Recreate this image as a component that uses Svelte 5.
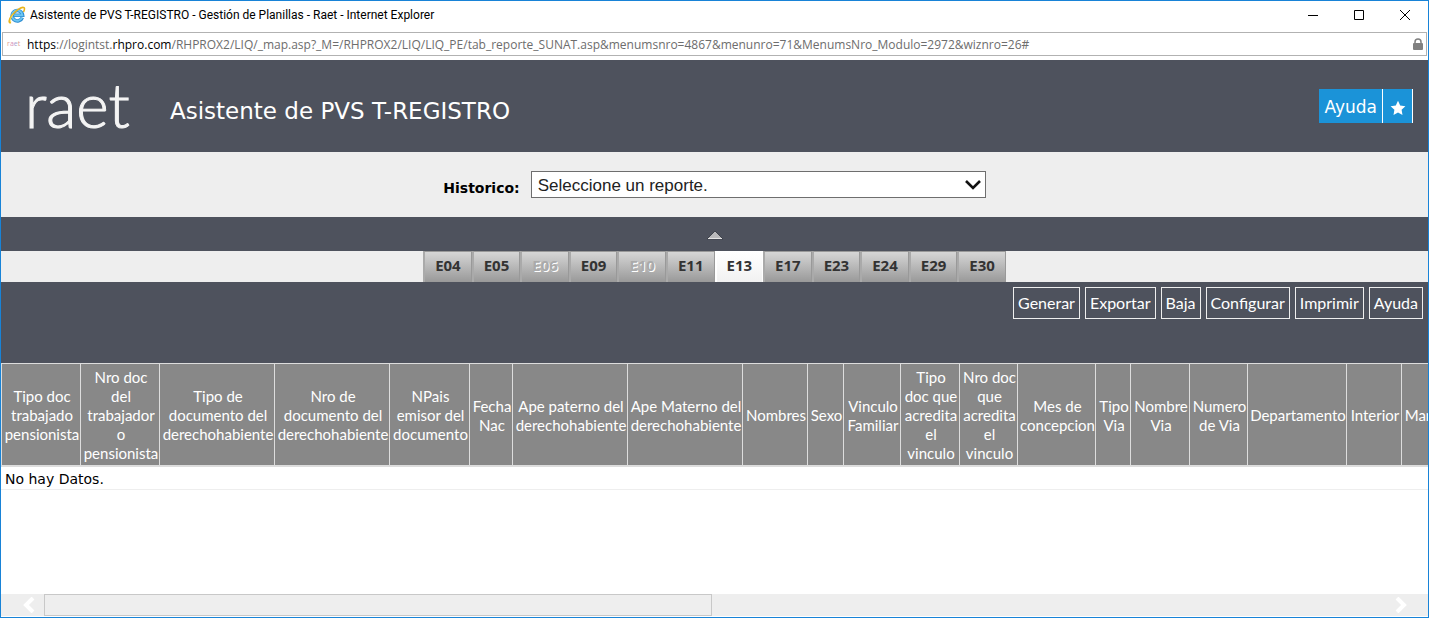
<script>
  const tabs = ['E04', 'E05', 'E06', 'E09', 'E10', 'E11', 'E13', 'E17', 'E23', 'E24', 'E29', 'E30'];
  const disabled = ['E06', 'E10'];
  let active = $state('E13');

  const actions = ['Generar', 'Exportar', 'Baja', 'Configurar', 'Imprimir', 'Ayuda'];

  const columns = [
    { width: 79, lines: ['Tipo doc', 'trabajado', 'pensionista'] },
    { width: 79, lines: ['Nro doc', 'del', 'trabajador', 'o', 'pensionista'] },
    { width: 115, lines: ['Tipo de', 'documento del', 'derechohabiente'] },
    { width: 115, lines: ['Nro de', 'documento del', 'derechohabiente'] },
    { width: 80, lines: ['NPais', 'emisor del', 'documento'] },
    { width: 43, lines: ['Fecha', 'Nac'] },
    { width: 115, lines: ['Ape paterno del', 'derechohabiente'] },
    { width: 115, lines: ['Ape Materno del', 'derechohabiente'] },
    { width: 65, lines: ['Nombres'] },
    { width: 36, lines: ['Sexo'] },
    { width: 57, lines: ['Vinculo', 'Familiar'] },
    { width: 59, lines: ['Tipo', 'doc que', 'acredita', 'el', 'vinculo'] },
    { width: 58, lines: ['Nro doc', 'que', 'acredita', 'el', 'vinculo'] },
    { width: 78, lines: ['Mes de', 'concepcion'] },
    { width: 35, lines: ['Tipo', 'Via'] },
    { width: 59, lines: ['Nombre', 'Via'] },
    { width: 58, lines: ['Numero', 'de Via'] },
    { width: 99, lines: ['Departamento'] },
    { width: 55, lines: ['Interior'] },
    { width: 64, lines: ['Manzana'] }
  ];
</script>

<div class="window">
  <div class="titlebar">
    <svg class="ie" viewBox="0 0 18 18" aria-hidden="true">
      <path d="M14.300 11.600A5.200 5.200 0 1 1 14.600 9.300H6.200" fill="none" stroke="#2a8bd0" stroke-width="3.6" />
      <path d="M14 11.600A5.200 5.200 0 1 1 14.400 9.200H6.200" fill="none" stroke="#6cc5f2" stroke-width="2" />
      <path d="M3 16.600C.3 17.300.6 13.600 4 9.200 7.700 4.400 14 .2 16 1.700c1 .8.4 2.500-.5 4.300" fill="none" stroke="#e8b41c" stroke-width="1.600" />
      <path d="M2.800 16.200C1.700 14.500 3 11 5.200 8.300" fill="none" stroke="#f8d858" stroke-width="1" />
    </svg>
    <span class="title">Asistente de PVS T-REGISTRO - Gestión de Planillas - Raet - Internet Explorer</span>
    <div class="controls">
      <button aria-label="Minimizar"><svg viewBox="0 0 12 12"><path d="M1 6.500h10" /></svg></button>
      <button aria-label="Maximizar"><svg viewBox="0 0 12 12"><path d="M1.500 1.500h9v9h-9z" /></svg></button>
      <button aria-label="Cerrar"><svg viewBox="0 0 12 12"><path d="M1 1l10 10M11 1L1 11" /></svg></button>
    </div>
  </div>

  <div class="address">
    <span class="favicon" aria-hidden="true"><i>r</i><i>a</i><i>e</i><i>t</i></span>
    <span class="url"><b>https</b>://logintst.<b>rhpro.com</b>/RHPROX2/LIQ/_map.asp?_M=/RHPROX2/LIQ/LIQ_PE/tab_reporte_SUNAT.asp&amp;menumsnro=4867&amp;menunro=71&amp;MenumsNro_Modulo=2972&amp;wiznro=26#</span>
    <svg class="lock" viewBox="0 0 10 13" aria-hidden="true">
      <path d="M2 6V4a3 3 0 0 1 6 0v2" fill="none" stroke="#808080" stroke-width="1.500" />
      <rect x="0" y="5" width="10" height="7" rx="1" fill="#808080" />
    </svg>
  </div>

  <header>
    <span class="logo">raet</span>
    <h1>Asistente de PVS T-REGISTRO</h1>
    <div class="help">
      <button>Ayuda</button>
      <button class="star" aria-label="Favorito">
        <svg viewBox="0 0 16 16"><path d="M8 .8l2.200 4.700 5.200.7-3.800 3.600.9 5.200L8 12.500 3.500 15l.9-5.200L.6 6.200l5.200-.7z" fill="#fff" /></svg>
      </button>
    </div>
  </header>

  <div class="filter">
    <label for="historico">Historico:</label>
    <div class="picker">
      <select id="historico">
        <option>Seleccione un reporte.</option>
      </select>
      <svg viewBox="0 0 16 10" aria-hidden="true"><path d="M1 1l7 7 7-7" fill="none" stroke="#111" stroke-width="2.600" /></svg>
    </div>
  </div>

  <div class="collapse">
    <button aria-label="Contraer">
      <svg viewBox="0 0 18 10"><path d="M9 1l8 8H1z" fill="#b9b9bb" stroke="#3f434c" stroke-width="1" /><path d="M2 8.500h14" stroke="#e4e4e4" /></svg>
    </button>
  </div>

  <nav>
    {#each tabs as tab}
      <button class="tab" class:active={tab === active} disabled={disabled.includes(tab)} onclick={() => (active = tab)}>{tab}</button>
    {/each}
  </nav>

  <div class="toolbar">
    {#each actions as action}
      <button>{action}</button>
    {/each}
  </div>

  <main>
    <table>
      <colgroup>
        {#each columns as column}
          <col style="width: {column.width}px" />
        {/each}
      </colgroup>
      <thead>
        <tr>
          {#each columns as column}
            <th scope="col">
              {#each column.lines as line, i}{#if i > 0}<br />{/if}{line}{/each}
            </th>
          {/each}
        </tr>
      </thead>
      <tbody>
        <tr><td colspan={columns.length}>No hay Datos.</td></tr>
      </tbody>
    </table>
  </main>

  <div class="scrollbar">
    <button aria-label="Desplazar a la izquierda"><svg viewBox="0 0 12 16"><path d="M10 1L3 8l7 7" /></svg></button>
    <div class="track"><div class="thumb"></div></div>
    <button aria-label="Desplazar a la derecha"><svg viewBox="0 0 12 16"><path d="M2 1l7 7-7 7" /></svg></button>
  </div>
</div>

<style>
  .window {
    box-sizing: border-box;
    min-height: 100vh;
    display: flex;
    flex-direction: column;
    overflow: hidden;
    border: 1px solid #1883d7;
    background: #fff;
    font-family: 'DejaVu Sans', Verdana, sans-serif;
    color: #000;
  }

  button {
    margin: 0;
    padding: 0;
    border: 0;
    background: none;
    color: inherit;
    font: inherit;
    cursor: pointer;
  }

  svg {
    display: block;
  }

  .titlebar {
    display: flex;
    align-items: center;
    height: 28px;
    padding: 0 0 3px 7px;
  }

  .ie {
    width: 18px;
    height: 18px;
  }

  .title {
    flex: 1;
    padding-left: 4px;
    white-space: nowrap;
    font: 12px/16px Roboto, 'Open Sans', sans-serif;
  }

  .controls {
    display: flex;
  }

  .controls button {
    display: grid;
    place-items: center;
    width: 46px;
    height: 28px;
  }

  .controls svg {
    width: 12px;
    height: 12px;
    fill: none;
    stroke: #000;
  }

  .address {
    display: flex;
    align-items: center;
    height: 22px;
    margin: 0 1px 4px;
    padding: 0 3px 0 4px;
    border: 1px solid #b2b2b2;
    font: 12px/16px 'Open Sans', 'Noto Sans', sans-serif;
    color: #6d6d6d;
  }

  .favicon {
    width: 20px;
    font: 7px/8px 'Open Sans', sans-serif;
  }

  .favicon i {
    font-style: normal;
    color: #e2a08f;
  }

  .favicon i:nth-child(2) {
    color: #d890b8;
  }

  .favicon i:nth-child(3) {
    color: #a8a0d0;
  }

  .url {
    flex: 1;
    padding-top: 2px;
    white-space: nowrap;
  }

  .url b {
    font-weight: 400;
    color: #000;
  }

  .lock {
    width: 10px;
    height: 13px;
  }

  header {
    display: flex;
    align-items: center;
    height: 92px;
    padding: 0 15px 0 24px;
    background: #4e525d;
    color: #fff;
  }

  .logo {
    width: 145px;
    font: 300 62px/64px Lato, sans-serif;
    padding-bottom: 4px;
    box-sizing: border-box;
    color: #f4f4f4;
    -webkit-text-stroke: 1px #f4f4f4;
  }

  h1 {
    flex: 1;
    margin: 0;
    padding-top: 10px;
    font-size: 23px;
    line-height: 28px;
    font-weight: 400;
  }

  .help {
    display: flex;
    height: 34px;
    font-size: 17px;
  }

  .help button {
    padding: 2px 5px 0;
    background: #1b93d8;
    border-right: 1px solid #fff;
  }

  .help .star {
    display: grid;
    place-items: center;
    width: 30px;
    padding: 4px 0 0;
  }

  .star svg {
    width: 16px;
    height: 16px;
  }

  .filter {
    display: flex;
    justify-content: center;
    align-items: center;
    gap: 11px;
    height: 65px;
    background: #eee;
  }

  label {
    padding-top: 6px;
    font-size: 14px;
    line-height: 20px;
    font-weight: 700;
  }

  .picker {
    display: grid;
    align-items: center;
    width: 455px;
  }

  .picker > * {
    grid-area: 1 / 1;
  }

  select {
    appearance: none;
    box-sizing: border-box;
    height: 27px;
    margin: 0;
    padding: 2px 24px 0 6px;
    border: 1px solid #6e6e6e;
    border-radius: 0;
    background: #fff;
    color: #222;
    font: 17px/23px 'Liberation Sans', Arial, sans-serif;
  }

  .picker svg {
    justify-self: end;
    width: 16px;
    height: 10px;
    margin-right: 5px;
    pointer-events: none;
  }

  .collapse {
    display: flex;
    justify-content: center;
    align-items: flex-end;
    height: 34px;
    background: #4e525d;
  }

  .collapse button {
    padding-bottom: 11px;
  }

  .collapse svg {
    width: 18px;
    height: 10px;
  }

  nav {
    display: flex;
    justify-content: center;
    height: 31px;
    background: #eee;
  }

  .tab {
    box-sizing: border-box;
    padding: 0 10px 4px;
    border: solid #999;
    border-width: 1px 1px 0 2px;
    border-left-color: #aaa;
    background: linear-gradient(#d6d6d6, #999);
    color: #333;
    font: 700 15px/20px 'Open Sans', 'Noto Sans', sans-serif;
  }

  .tab.active {
    border-color: #fff;
    background: linear-gradient(#fff, #f1f1f1);
  }

  .tab:disabled {
    color: #aaa;
    text-shadow: 1px 1px 0 #fff;
    cursor: default;
  }

  .toolbar {
    display: flex;
    justify-content: flex-end;
    align-items: flex-start;
    gap: 5px;
    height: 76px;
    padding: 5px 5px 0;
    background: #4e525d;
    color: #fff;
    font: 16px/20px Lato, sans-serif;
  }

  .toolbar button {
    height: 32px;
    padding: 0 4px;
    border: 1px solid #eee;
  }

  main {
    flex: 1;
    overflow: hidden;
  }

  table {
    width: 1464px;
    table-layout: fixed;
    border-collapse: separate;
    border-spacing: 0;
  }

  th {
    box-sizing: border-box;
    height: 103px;
    padding: 4px 0 2px 2px;
    border: solid #ddd;
    border-width: 1px 0 2px 1px;
    background: #888;
    color: #fff;
    font: 400 15px/19px Lato, sans-serif;
    white-space: nowrap;
  }

  td {
    height: 20px;
    padding: 2px 4px 0;
    border-bottom: 1px solid #eee;
    font-size: 14px;
    line-height: 20px;
  }

  .scrollbar {
    display: flex;
    height: 22px;
    margin-bottom: 1px;
    background: #eee;
  }

  .scrollbar button {
    display: grid;
    place-items: center;
    width: 43px;
    padding-left: 12px;
  }

  .scrollbar button:last-child {
    padding: 0 12px 0 0;
  }

  .scrollbar svg {
    width: 12px;
    height: 16px;
    fill: none;
    stroke: #fff;
    stroke-width: 4;
  }

  .track {
    flex: 1;
  }

  .thumb {
    box-sizing: border-box;
    width: calc(50% - 3px);
    height: 22px;
    border: 1px solid #c8c8c8;
  }
</style>
